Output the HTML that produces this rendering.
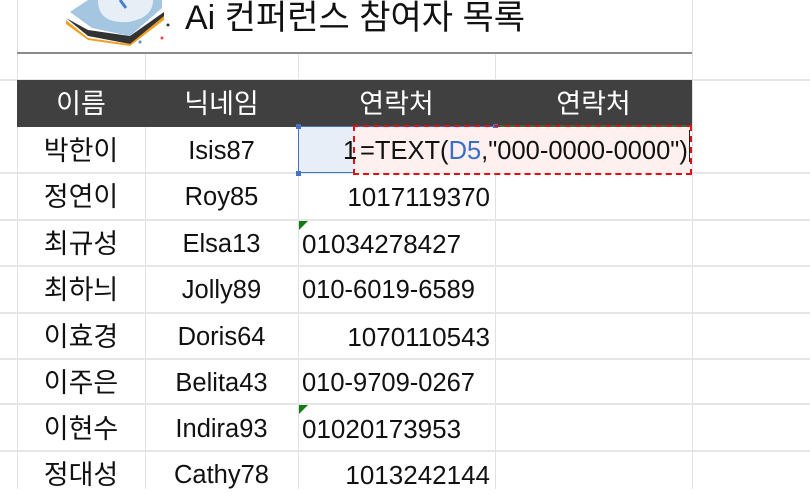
<!DOCTYPE html>
<html><head><meta charset="utf-8"><style>
body{margin:0;width:810px;height:503px;background:#fff;position:relative;overflow:hidden;font-family:"Liberation Sans","Noto Sans CJK KR",sans-serif;}
.a{position:absolute}
.vl{position:absolute;width:1px;background:#e1e1e1}
.hl{position:absolute;height:2px;background:#e6e6e6;left:0;width:810px}
.c{position:absolute;font-size:25.5px;color:#111;height:46px;line-height:48px;white-space:nowrap}
.n{font-size:26px}
.k{font-size:27px}
.hd{position:absolute;top:80px;height:47px;line-height:48px;color:#fff;font-size:27px;text-align:center}
.tri{position:absolute;width:0;height:0;border-top:9px solid #137a13;border-right:9px solid transparent}
</style></head><body>
<div class="vl" style="left:17px;top:0;height:489px"></div>
<div class="vl" style="left:145px;top:53px;height:436px"></div>
<div class="vl" style="left:298px;top:53px;height:436px"></div>
<div class="vl" style="left:495px;top:53px;height:436px"></div>
<div class="vl" style="left:692px;top:0;height:489px"></div>
<div class="a" style="left:17px;top:52px;width:675px;height:2px;background:#8c8c8c"></div>
<div class="hl" style="top:79px"></div>
<div class="hl" style="top:172px"></div>
<div class="hl" style="top:219px"></div>
<div class="hl" style="top:265px"></div>
<div class="hl" style="top:312px"></div>
<div class="hl" style="top:358px"></div>
<div class="hl" style="top:403px"></div>
<div class="hl" style="top:450px"></div>
<div class="a" style="left:0;top:489px;width:810px;height:14px;background:#fff"></div>
<svg class="a" style="left:58px;top:0" width="115" height="48">
<path d="M8 18 L30 36 L72 44 L106 18 L106 12 L72 36 L30 30 Z" fill="#333"/>
<path d="M8 20 L30 38 L72 44 L106 16 L106 20 L72 46 L30 40 L8 24Z" fill="#f0a020"/>
<path d="M12 12 L34 28 L72 36 L104 8 L104 0 L30 0 Z" fill="#8fb8d8" opacity=".8"/>
<path d="M40 0 Q40 24 70 22 Q95 18 95 0Z" fill="#e8eef6"/>
<path d="M62 0 L68 8" stroke="#4a7fd0" stroke-width="3"/>
<circle cx="110" cy="25" r="1.5" fill="#333"/><circle cx="104" cy="38" r="1.5" fill="#e44"/><circle cx="82" cy="42" r="1.5" fill="#58c"/>
</svg>
<div class="a" style="left:185px;top:-2px;font-size:34px;line-height:40px;color:#111">Ai 컨퍼런스 참여자 목록</div>
<div class="a" style="left:17px;top:80px;width:675px;height:47px;background:#404040"></div>
<div class="hd" style="left:17px;width:128px">이름</div>
<div class="hd" style="left:145px;width:153px">닉네임</div>
<div class="hd" style="left:298px;width:197px">연락처</div>
<div class="hd" style="left:495px;width:197px">연락처</div>
<div class="a" style="left:298px;top:126px;width:195px;height:45px;background:#e8eef8;border:1px solid #4472c4"></div>
<div class="a" style="left:296px;top:124px;width:5px;height:5px;background:#4472c4"></div>
<div class="a" style="left:493px;top:124px;width:5px;height:5px;background:#4472c4"></div>
<div class="a" style="left:296px;top:171px;width:5px;height:5px;background:#4472c4"></div>
<div class="a" style="left:495px;top:125px;width:197px;height:48px;border-top:2px solid #1e7a3a;border-bottom:2px solid #1e7a3a;box-sizing:border-box"></div>
<div class="a" style="left:355px;top:128px;width:335px;height:45px;background:#fdf0ee"></div>
<div class="a" style="left:353px;top:125px;width:339px;height:50px;border:2px dashed #e01010;box-sizing:border-box"></div>
<div class="c" style="left:343px;top:127px">1</div>
<div class="c" style="left:360px;top:127px">=TEXT(<span style="color:#3a6fc8">D5</span>,"000-0000-0000")</div>
<div class="a" style="left:689px;top:130px;width:1px;height:32px;background:#222"></div>
<div class="c k" style="left:17px;width:128px;text-align:center;top:127px">박한이</div>
<div class="c" style="left:145px;width:153px;text-align:center;top:127px">Isis87</div>
<div class="c k" style="left:17px;width:128px;text-align:center;top:173px">정연이</div>
<div class="c" style="left:145px;width:153px;text-align:center;top:173px">Roy85</div>
<div class="c n" style="right:320px;top:173px">1017119370</div>
<div class="c k" style="left:17px;width:128px;text-align:center;top:220px">최규성</div>
<div class="c" style="left:145px;width:153px;text-align:center;top:220px">Elsa13</div>
<div class="tri" style="left:299px;top:221px"></div>
<div class="c n" style="left:302px;top:220px">01034278427</div>
<div class="c k" style="left:17px;width:128px;text-align:center;top:266px">최하늬</div>
<div class="c" style="left:145px;width:153px;text-align:center;top:266px">Jolly89</div>
<div class="c" style="left:302px;top:266px">010-6019-6589</div>
<div class="c k" style="left:17px;width:128px;text-align:center;top:313px">이효경</div>
<div class="c" style="left:145px;width:153px;text-align:center;top:313px">Doris64</div>
<div class="c n" style="right:320px;top:313px">1070110543</div>
<div class="c k" style="left:17px;width:128px;text-align:center;top:359px">이주은</div>
<div class="c" style="left:145px;width:153px;text-align:center;top:359px">Belita43</div>
<div class="c" style="left:302px;top:359px">010-9709-0267</div>
<div class="c k" style="left:17px;width:128px;text-align:center;top:405px">이현수</div>
<div class="c" style="left:145px;width:153px;text-align:center;top:405px">Indira93</div>
<div class="tri" style="left:299px;top:405px"></div>
<div class="c n" style="left:302px;top:405px">01020173953</div>
<div class="c k" style="left:17px;width:128px;text-align:center;top:451px">정대성</div>
<div class="c" style="left:145px;width:153px;text-align:center;top:451px">Cathy78</div>
<div class="c n" style="right:320px;top:451px">1013242144</div>
</body></html>
